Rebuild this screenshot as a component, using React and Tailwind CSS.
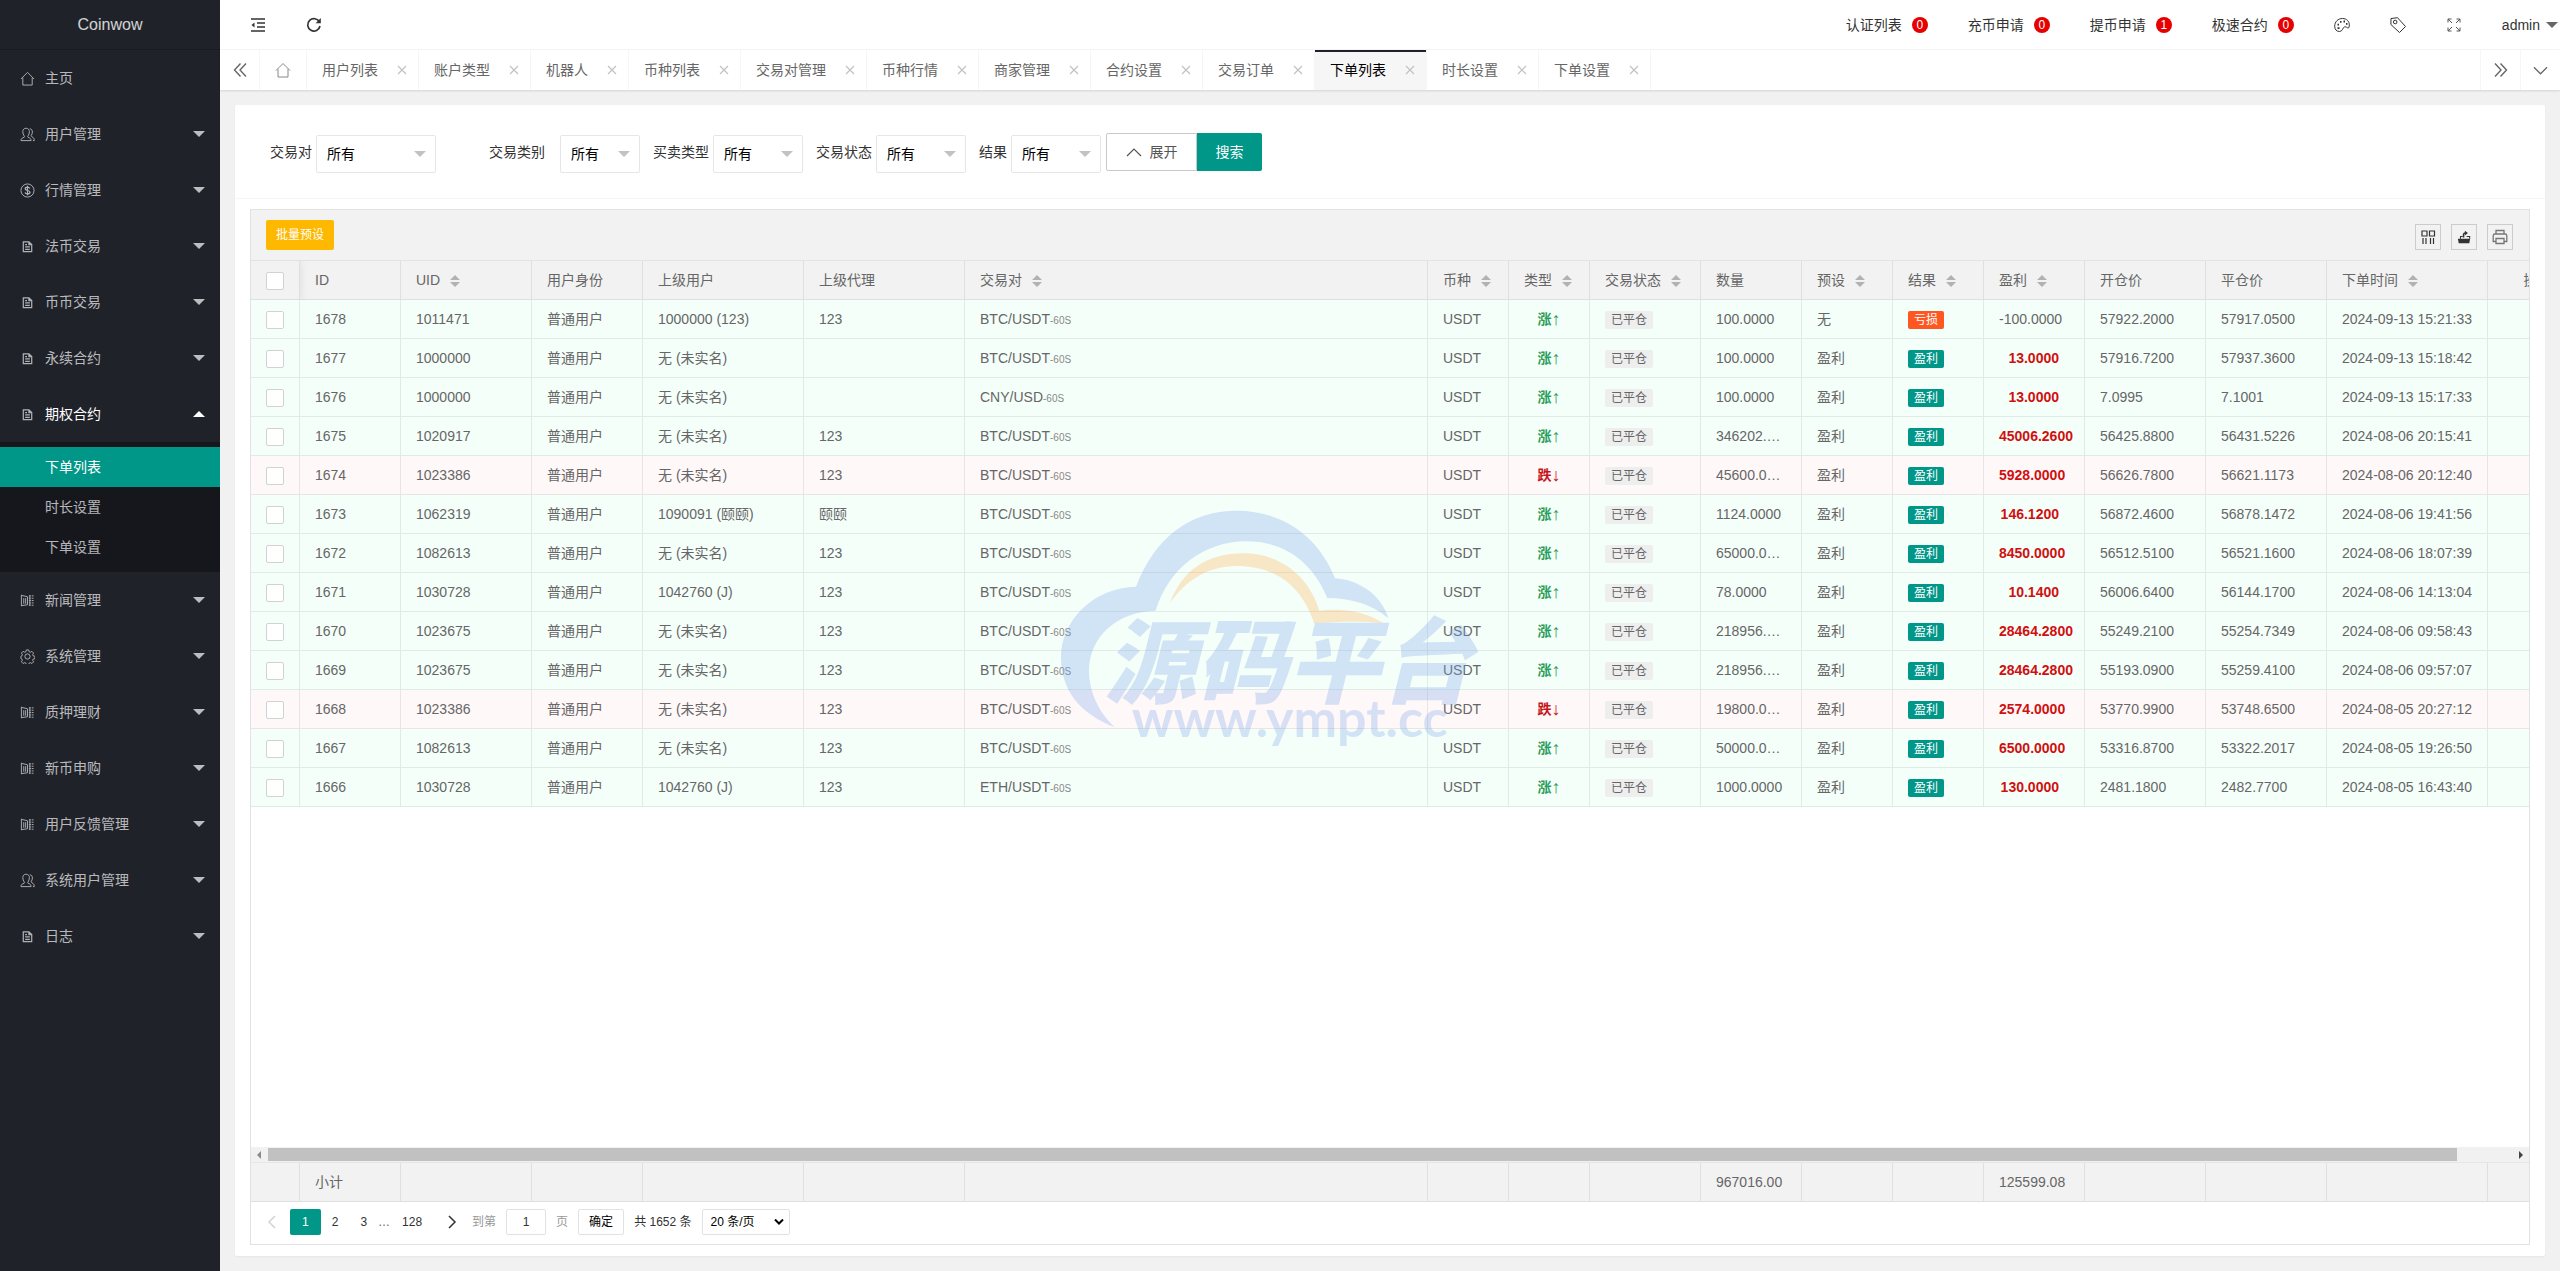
import { useState } from 'react'

const NAV = [
  { label: '主页', icon: 'home' },
  { label: '用户管理', icon: 'user', sub: true },
  { label: '行情管理', icon: 'dollar', sub: true },
  { label: '法币交易', icon: 'file', sub: true },
  { label: '币币交易', icon: 'file', sub: true },
  { label: '永续合约', icon: 'file', sub: true },
  { label: '期权合约', icon: 'file', sub: true, children: ['下单列表', '时长设置', '下单设置'] },
  { label: '新闻管理', icon: 'book', sub: true },
  { label: '系统管理', icon: 'gear', sub: true },
  { label: '质押理财', icon: 'book', sub: true },
  { label: '新币申购', icon: 'book', sub: true },
  { label: '用户反馈管理', icon: 'book', sub: true },
  { label: '系统用户管理', icon: 'user', sub: true },
  { label: '日志', icon: 'file', sub: true },
]

const TABS = ['用户列表', '账户类型', '机器人', '币种列表', '交易对管理', '币种行情', '商家管理', '合约设置', '交易订单', '下单列表', '时长设置', '下单设置']

const NOTICES = [['认证列表', 0], ['充币申请', 0], ['提币申请', 1], ['极速合约', 0]]

const COLUMNS = [
  { label: 'ID', col: 'w-[101px]' },
  { label: 'UID', col: 'w-[131px]', sort: true },
  { label: '用户身份', col: 'w-[111px]' },
  { label: '上级用户', col: 'w-[161px]' },
  { label: '上级代理', col: 'w-[161px]' },
  { label: '交易对', col: 'w-auto', sort: true },
  { label: '币种', col: 'w-[81px]', sort: true },
  { label: '类型', col: 'w-[81px]', sort: true },
  { label: '交易状态', col: 'w-[111px]', sort: true },
  { label: '数量', col: 'w-[101px]' },
  { label: '预设', col: 'w-[91px]', sort: true },
  { label: '结果', col: 'w-[91px]', sort: true },
  { label: '盈利', col: 'w-[101px]', sort: true },
  { label: '开仓价', col: 'w-[121px]' },
  { label: '平仓价', col: 'w-[121px]' },
  { label: '下单时间', col: 'w-[161px]', sort: true },
  { label: '操作', col: 'w-[100px]', center: true },
]

// id, uid, parent, agent, pair, up, amount, preset, profit, open, close, time
const ORDERS = [
  ['1678', '1011471', '1000000 (123)', '123', 'BTC/USDT', true, '100.0000', '无', '-100.0000', '57922.2000', '57917.0500', '2024-09-13 15:21:33'],
  ['1677', '1000000', '无 (未实名)', '', 'BTC/USDT', true, '100.0000', '盈利', '13.0000', '57916.7200', '57937.3600', '2024-09-13 15:18:42'],
  ['1676', '1000000', '无 (未实名)', '', 'CNY/USD', true, '100.0000', '盈利', '13.0000', '7.0995', '7.1001', '2024-09-13 15:17:33'],
  ['1675', '1020917', '无 (未实名)', '123', 'BTC/USDT', true, '346202.0000', '盈利', '45006.2600', '56425.8800', '56431.5226', '2024-08-06 20:15:41'],
  ['1674', '1023386', '无 (未实名)', '123', 'BTC/USDT', false, '45600.0000', '盈利', '5928.0000', '56626.7800', '56621.1173', '2024-08-06 20:12:40'],
  ['1673', '1062319', '1090091 (颐颐)', '颐颐', 'BTC/USDT', true, '1124.0000', '盈利', '146.1200', '56872.4600', '56878.1472', '2024-08-06 19:41:56'],
  ['1672', '1082613', '无 (未实名)', '123', 'BTC/USDT', true, '65000.0000', '盈利', '8450.0000', '56512.5100', '56521.1600', '2024-08-06 18:07:39'],
  ['1671', '1030728', '1042760 (J)', '123', 'BTC/USDT', true, '78.0000', '盈利', '10.1400', '56006.6400', '56144.1700', '2024-08-06 14:13:04'],
  ['1670', '1023675', '无 (未实名)', '123', 'BTC/USDT', true, '218956.0000', '盈利', '28464.2800', '55249.2100', '55254.7349', '2024-08-06 09:58:43'],
  ['1669', '1023675', '无 (未实名)', '123', 'BTC/USDT', true, '218956.0000', '盈利', '28464.2800', '55193.0900', '55259.4100', '2024-08-06 09:57:07'],
  ['1668', '1023386', '无 (未实名)', '123', 'BTC/USDT', false, '19800.0000', '盈利', '2574.0000', '53770.9900', '53748.6500', '2024-08-05 20:27:12'],
  ['1667', '1082613', '无 (未实名)', '123', 'BTC/USDT', true, '50000.0000', '盈利', '6500.0000', '53316.8700', '53322.2017', '2024-08-05 19:26:50'],
  ['1666', '1030728', '1042760 (J)', '123', 'ETH/USDT', true, '1000.0000', '盈利', '130.0000', '2481.1800', '2482.7700', '2024-08-05 16:43:40'],
]

const TOTALS = { ID: '小计', 数量: '967016.00', 盈利: '125599.08' }

const PATHS = {
  home: <path d="M1 8.5 8 1.5l7 7M3 7v8h10V7" />,
  user: (
    <>
      <path d="M1 14.500h10.800c0-2-1-2.800-3.200-3.500-.5-.2-.5-1 0-1.500C9.500 8.300 10 6.700 10 5c0-2.300-1.300-3.700-3.500-3.700S3 2.700 3 5c0 1.700.5 3.300 1.400 4.500.5.500.5 1.300 0 1.500C2.200 11.700 1 12.500 1 14.500z" />
      <path d="M10.500 1.800c1.800.3 2.700 1.600 2.700 3.500 0 1.500-.5 2.700-1.300 3.900.1.700.4 1 1 1.300 1.600.8 2.300 1.700 2.300 4h-1.400" />
    </>
  ),
  dollar: (
    <>
      <circle cx="8" cy="8" r="7" />
      <path d="M10.500 5.800C10 4.900 9.200 4.500 8 4.500c-1.500 0-2.500.7-2.500 1.700 0 2.400 5.200 1.200 5.200 3.600 0 1.100-1.100 1.800-2.700 1.800-1.400 0-2.300-.5-2.700-1.500M8 3v10" strokeWidth="1.300" />
    </>
  ),
  file: <path d="M3.500 3h6l3 3v7.500h-9zM9.500 3v3h3M5.500 8.500h5M5.500 11h5M5.500 6h2" strokeWidth="1.300" />,
  book: (
    <>
      <path d="M1.500 2v12M1.500 2.500 8 4v8.500l-6.500 1M4 5.500v6M6 5.500v6" />
      <path d="M9.500 3h5M9.500 5.500h5M9.500 8h5M9.500 10.500h5M9.500 13h5" strokeDasharray="2 1" />
      <path d="M10.500 2.500v11" />
    </>
  ),
  gear: (
    <>
      <circle cx="8" cy="8" r="2.800" />
      <path d="M6.700 1h2.600l.4 1.900 1.300.6 1.700-1 1.800 1.800-1 1.700.5 1.300 1.900.4v2.600l-1.900.4-.5 1.300 1 1.700-1.800 1.800-1.700-1-1.300.6-.4 1.900H6.700l-.4-1.900-1.300-.6-1.700 1-1.800-1.800 1-1.700L2 10.700l-1-.4V7.700L2 7.300l.5-1.300-1-1.700 1.800-1.800 1.700 1 1.300-.6z" />
    </>
  ),
  shrink: (
    <>
      <path d="M1 2h14M7 6h8M7 10h8M1 14h14" strokeWidth="1.600" />
      <path d="M4.500 5.500 1.500 8l3 2.500z" fill="currentColor" stroke="none" />
    </>
  ),
  refresh: (
    <>
      <path d="M13.500 5.200A6.200 6.200 0 1 0 14 9" strokeWidth="1.700" />
      <path d="M14.800 1v5.200H9.600z" fill="currentColor" stroke="none" />
    </>
  ),
  palette: (
    <>
      <path d="M5.500 14.500C2.500 14.500.7 12.500.7 9.200.7 4.800 4 1.500 8.500 1.500c4.200 0 6.800 2.800 6.800 6.300 0 1.900-.4 3.200-1 3.200-1.200 0-1.800-1.500-3.600-1.200-2.300.4-1.700 4.700-5.200 4.700z" />
      <path d="M3.500 11.200h2M3.500 7.600h1.500M6 4.800h1.500M9.500 4.500H11M12 6.800h1.500" strokeWidth="1.800" />
    </>
  ),
  tag: (
    <>
      <path d="M1 1.500 7.500.7l8 8.800-6 6L.9 7.500z" />
      <circle cx="5.200" cy="5" r="1.800" />
    </>
  ),
  full: <path d="M2 5.500V2h3.500M2 2l4 4M10.500 2H14v3.500M14 2l-4 4M2 10.500V14h3.500M2 14l4-4M14 10.500V14h-3.500M14 14l-4-4" />,
  left2: <path d="M8.500 1.500 2.500 8l6 6.500M14 1.500 8 8l6 6.500" strokeWidth="1.400" />,
  right2: <path d="M2 1.500 8 8l-6 6.500M7.500 1.500l6 6.500-6 6.500" strokeWidth="1.400" />,
  down: <path d="M1 4.500 8 11.500l7-7" strokeWidth="1.300" />,
  up: <path d="M1 12 8 5l7 7" strokeWidth="1.200" />,
  prev: <path d="M11 2 5 8l6 6" strokeWidth="1.500" />,
  next: <path d="M5 2l6 6-6 6" strokeWidth="1.500" />,
  close: <path d="M4 4l8 8M12 4l-8 8" strokeWidth="1.200" />,
  cols: <path d="M2 2h5v5H2zM9.500 2h5v5h-5zM3 9v6M6 9v6M10.500 9v6M13.500 9v6" strokeWidth="1.200" />,
  exportIcon: (
    <>
      <path d="M4 10V7.500h2.500M11 7.500h3.500V10" strokeWidth="1.200" />
      <path d="M1 10h14l-1 5H2z" fill="currentColor" stroke="none" />
      <path d="M7.500 8.500V5.500c0-1.300.8-2 2-2" strokeWidth="1.800" />
      <path d="M9 .8l3.500 2.700L9 6.200z" fill="currentColor" stroke="none" />
    </>
  ),
  print: <path d="M4 5V1.500h8V5M3.500 12.500H1.200V6.800C1.200 5.800 2 5 3 5h10c1 0 1.800.8 1.800 1.800v5.700h-2.300M4 9.500h8v5H4z" strokeWidth="1.300" />,
}

function Icon({ name, className = 'size-4' }) {
  return (
    <svg viewBox="0 0 16 16" fill="none" stroke="currentColor" className={`shrink-0 ${className}`} aria-hidden="true">
      {PATHS[name]}
    </svg>
  )
}

function Caret({ up, className }) {
  return (
    <svg viewBox="0 0 12 6" fill="currentColor" className={`h-1.5 w-3 shrink-0 ${className}`} aria-hidden="true">
      <path d={up ? 'M0 6 6 0l6 6z' : 'M0 0h12L6 6z'} />
    </svg>
  )
}

function Sidebar() {
  return (
    <nav className="w-[220px] shrink-0 overflow-hidden bg-[#20222a] text-sm text-white/70">
      <div className="flex h-[50px] items-center justify-center border-b border-black/20 text-base text-white/80">Coinwow</div>
      <ul>
        {NAV.map((item) => (
          <li key={item.label}>
            <a href="#" className={`flex h-14 items-center pl-5 pr-[15px] ${item.children ? 'text-white' : ''}`}>
              <Icon name={item.icon} className="size-[15px] text-white opacity-65" />
              <span className="ml-2.5 flex-1">{item.label}</span>
              {item.sub && <Caret up={!!item.children} />}
            </a>
            {item.children && (
              <ul className="bg-black/30 py-[5px]">
                {item.children.map((child) => (
                  <li key={child}>
                    <a href="#" className={`flex h-10 items-center pl-[45px] ${child === '下单列表' ? 'bg-[#009688] text-white' : ''}`}>{child}</a>
                  </li>
                ))}
              </ul>
            )}
          </li>
        ))}
      </ul>
    </nav>
  )
}

function Header() {
  return (
    <header className="flex h-[50px] items-center justify-between border-b border-[#f6f6f6] bg-white">
      <div className="flex items-center pl-[30px]">
        <button aria-label="侧边伸缩"><Icon name="shrink" /></button>
        <button aria-label="刷新" className="ml-10"><Icon name="refresh" /></button>
      </div>
      <div className="flex items-center">
        {NOTICES.map(([label, count]) => (
          <a href="#" key={label} className="flex items-center px-5">
            {label}
            <span className="ml-2.5 flex size-4 items-center justify-center rounded-full bg-[#e60000] text-xs text-white">{count}</span>
          </a>
        ))}
        <button aria-label="主题" className="px-5"><Icon name="palette" /></button>
        <button aria-label="便签" className="px-5"><Icon name="tag" /></button>
        <button aria-label="全屏" className="px-5 text-[#555]"><Icon name="full" /></button>
        <a href="#" className="flex items-center pl-5 pr-0.5">
          admin
          <Caret className="ml-1.5 text-[#666]" />
        </a>
      </div>
    </header>
  )
}

function TabBar({ active, onSelect }) {
  return (
    <div className="relative z-10 flex h-10 bg-white text-[#666] shadow-[0_1px_2px_rgba(0,0,0,0.12)]">
      <button aria-label="向左" className="flex w-10 items-center justify-center border-r border-[#f6f6f6]"><Icon name="left2" /></button>
      <button aria-label="主页" className="flex w-[47px] items-center justify-center border-r border-[#f6f6f6] text-[#888]"><Icon name="home" /></button>
      {TABS.map((tab) => (
        <div
          key={tab}
          className={`flex items-center border-r border-[#f6f6f6] pl-[15px] pr-2 ${
            tab === active ? 'bg-[#f6f6f6] text-black shadow-[inset_0_2px_0_#20222a]' : ''
          }`}
        >
          <button onClick={() => onSelect(tab)}>{tab}</button>
          <button aria-label={`关闭${tab}`} className="ml-4 text-[#c2c2c2]"><Icon name="close" /></button>
        </div>
      ))}
      <button aria-label="向右" className="ml-auto flex w-10 items-center justify-center border-l border-[#f6f6f6]"><Icon name="right2" /></button>
      <button aria-label="更多" className="flex w-10 items-center justify-center border-l border-[#f6f6f6]"><Icon name="down" className="size-[15px]" /></button>
    </div>
  )
}

function Filter({ label, gap, width }) {
  return (
    <label className={`flex ${gap}`}>
      <span className="leading-[38px]">{label}</span>
      <span className={`relative mt-0.5 ${width}`}>
        <select className="h-[38px] w-full appearance-none rounded-xs border border-[#e6e6e6] bg-white pl-2.5 text-black">
          <option>所有</option>
        </select>
        <Caret className="pointer-events-none absolute right-2.5 top-4 text-[#c2c2c2]" />
      </span>
    </label>
  )
}

function Filters() {
  return (
    <form className="flex h-[94px] border-b border-[#f6f6f6] pl-[35px] pt-7" onSubmit={(e) => e.preventDefault()}>
      <Filter label="交易对" gap="gap-1" width="w-[120px]" />
      <Filter label="交易类别" gap="ml-[53px] gap-[15px]" width="w-20" />
      <Filter label="买卖类型" gap="ml-[13px] gap-1" width="w-[90px]" />
      <Filter label="交易状态" gap="ml-[13px] gap-1" width="w-[90px]" />
      <Filter label="结果" gap="ml-[13px] gap-1" width="w-[90px]" />
      <button type="button" className="ml-[5px] flex h-[38px] w-[91px] items-center justify-center gap-2 rounded-l-xs border border-[#c9c9c9] text-[#555]">
        <Icon name="up" />
        展开
      </button>
      <button className="h-[38px] w-[65px] rounded-r-xs bg-[#009688] text-white">搜索</button>
    </form>
  )
}

function Columns() {
  return (
    <colgroup>
      <col className="w-[49px]" />
      {COLUMNS.map((c) => <col key={c.label} className={c.col} />)}
    </colgroup>
  )
}

function Check({ label }) {
  return (
    <input
      type="checkbox"
      aria-label={label}
      className="mx-auto mt-px block size-[18px] appearance-none rounded-xs border border-[#d2d2d2] bg-white checked:bg-[#5fb878]"
    />
  )
}

const CELL = 'h-[39px] truncate border-r border-b border-black/8 px-[15px] text-left font-normal'
const TABLE = 'w-[calc(100%+59px)] table-fixed border-separate border-spacing-0'

function OrderRow({ order }) {
  const [id, uid, parent, agent, pair, up, amount, preset, profit, open, close, time] = order
  const loss = profit.startsWith('-')
  return (
    <tr className={up ? 'bg-[#f5fffa]' : 'bg-[#fff8f8]'}>
      <td className="h-[39px] border-r border-b border-black/8"><Check label={id} /></td>
      <td className={CELL}>{id}</td>
      <td className={CELL}>{uid}</td>
      <td className={CELL}>普通用户</td>
      <td className={CELL}>{parent}</td>
      <td className={CELL}>{agent}</td>
      <td className={CELL}>{pair}<span className="text-[10px] text-[#888]">-60S</span></td>
      <td className={CELL}>USDT</td>
      <td className="h-[39px] border-r border-b border-black/8">
        <span className={`flex items-center justify-center leading-5 ${up ? 'text-[#2a9d57]' : 'text-[#c4161c]'}`}>
          <b>{up ? '涨' : '跌'}</b>
          <span className="text-lg leading-5">{up ? '↑' : '↓'}</span>
        </span>
      </td>
      <td className={CELL}>
        <span className="inline-block h-[18px] rounded-xs bg-[#eee] px-1.5 text-xs leading-[18px]">已平仓</span>
      </td>
      <td className={CELL}>{amount}</td>
      <td className={CELL}>{preset}</td>
      <td className={CELL}>
        <span className={`inline-block h-[18px] rounded-xs px-1.5 text-xs leading-[18px] text-white ${loss ? 'bg-[#ff5722]' : 'bg-[#009688]'}`}>
          {loss ? '亏损' : '盈利'}
        </span>
      </td>
      <td className="h-[39px] border-r border-b border-black/8 px-[15px]">
        {loss ? profit : <b className="block w-[60px] text-right text-[#d01010]">{profit}</b>}
      </td>
      <td className={CELL}>{open}</td>
      <td className={CELL}>{close}</td>
      <td className={CELL}>{time}</td>
      <td className={CELL} />
    </tr>
  )
}

function OrderTable() {
  return (
    <div className="flex-1 overflow-hidden">
      <table className={TABLE}>
        <Columns />
        <thead>
          <tr className="bg-[#f2f2f2]">
            <th className="h-[39px] border-r border-b border-black/8 shadow-[1px_0_8px_rgba(0,0,0,0.08)]"><Check label="全选" /></th>
            {COLUMNS.map((c) => (
              <th key={c.label} className={CELL}>
                <span className={`flex items-center ${c.center ? 'justify-center' : ''}`}>
                  {c.label}
                  {c.sort && (
                    <svg viewBox="0 0 10 12" fill="#b2b2b2" className="ml-2.5 mt-0.5 h-3 w-2.5 shrink-0" aria-hidden="true">
                      <path d="M0 5 5 0l5 5zM0 7h10l-5 5z" />
                    </svg>
                  )}
                </span>
              </th>
            ))}
          </tr>
        </thead>
        <tbody>
          {ORDERS.map((order) => <OrderRow key={order[0]} order={order} />)}
        </tbody>
      </table>
    </div>
  )
}

function ScrollBar() {
  return (
    <div className="flex h-4 items-center border-b border-[#e6e6e6] bg-[#f1f1f1]">
      <svg viewBox="0 0 4 8" fill="#8a8a8a" className="mx-1.5 h-2 w-1 shrink-0"><path d="M4 0v8L0 4z" /></svg>
      <div className="ml-px flex-1">
        <div className="h-[13px] w-[97.5%] bg-[#c1c1c1]" />
      </div>
      <svg viewBox="0 0 4 8" fill="#444" className="mx-1.5 h-2 w-1 shrink-0"><path d="M0 0v8l4-4z" /></svg>
    </div>
  )
}

function Pager() {
  return (
    <div className="flex h-[42px] items-center pl-[13px] pb-0.5 text-xs text-[#333]">
      <button aria-label="上一页" className="text-[#d2d2d2]"><Icon name="prev" /></button>
      <button className="ml-2.5 h-[26px] rounded-xs bg-[#009688] px-3 text-white">1</button>
      <button className="px-[11px]">2</button>
      <button className="px-[11px]">3</button>
      <span className="text-[#666]">…</span>
      <button className="px-3">128</button>
      <button aria-label="下一页" className="ml-2.5"><Icon name="next" /></button>
      <label className="ml-3 flex items-center text-[#999]">
        到第
        <input defaultValue="1" className="mx-2.5 h-[26px] w-10 rounded-xs border border-[#e2e2e2] text-center text-[#333]" />
        页
      </label>
      <button className="ml-2.5 h-[26px] w-[46px] rounded-xs border border-[#e2e2e2] text-black">确定</button>
      <span className="ml-2.5">共 1652 条</span>
      <label className="relative ml-2.5">
        <select aria-label="每页条数" className="h-[26px] w-[88px] appearance-none rounded-xs border border-[#e2e2e2] pl-2 text-black">
          <option>20 条/页</option>
        </select>
        <svg viewBox="0 0 10 6" fill="none" stroke="#000" strokeWidth="2" className="pointer-events-none absolute right-1.5 top-2.5 h-1.5 w-2.5">
          <path d="M1 .5l4 4 4-4" />
        </svg>
      </label>
    </div>
  )
}

function Watermark() {
  return (
    <div className="pointer-events-none absolute inset-0 flex items-center justify-center">
      <svg viewBox="0 16 1440 840" className="h-[280px] w-[480px] opacity-30" fill="#7ca8ed">
        <path d="M225 710C120 670 63 600 63 500C63 390 160 290 288 288C345 140 450 60 590 60C725 60 835 135 885 263C960 268 1025 315 1045 383C995 340 930 322 862 322C815 210 730 152 620 152C490 152 385 235 347 360C230 362 147 440 147 540C147 600 175 665 225 710Z" />
        <path fill="#fdb253" d="M390 338C425 240 500 188 610 188C715 188 805 250 838 360C910 352 975 362 1035 400C965 388 890 392 823 400C785 280 700 226 590 226C505 226 435 270 390 338Z" />
        <text x="192" y="616" fontSize="276" fontWeight="900" fontStyle="italic" fontFamily="'Noto Sans CJK SC', sans-serif">源码平台</text>
        <text x="275" y="740" fontSize="156" fontWeight="700" fontFamily="Lato, sans-serif">www.ympt.cc</text>
      </svg>
    </div>
  )
}

function App() {
  const [active, setActive] = useState('下单列表')

  return (
    <div className="relative flex h-screen bg-[#f1f1f1] font-['Liberation_Sans','Noto_Sans_CJK_SC',sans-serif] text-sm text-[#333]">
      <Sidebar />
      <div className="flex min-w-0 flex-1 flex-col">
        <Header />
        <TabBar active={active} onSelect={setActive} />
        <main className="flex min-h-0 flex-1 flex-col p-[15px]">
          <div className="flex min-h-0 flex-1 flex-col rounded-xs bg-white shadow-[0_1px_2px_rgba(0,0,0,0.05)]">
            <Filters />
            <div className="mx-[15px] mb-[11px] mt-2.5 flex min-h-0 flex-1 flex-col overflow-hidden border border-[#e2e2e2] text-[#666]">
              <div className="flex h-[51px] shrink-0 items-center justify-between border-b border-[#e2e2e2] bg-[#f2f2f2] pl-[15px] pr-4">
                <button className="h-[30px] rounded-xs bg-[#ffb800] px-2.5 text-xs text-white">批量预设</button>
                <div className="mt-1 flex gap-2.5 text-[#333]">
                  <button aria-label="筛选列" className="flex size-[26px] items-center justify-center border border-[#ccc]"><Icon name="cols" /></button>
                  <button aria-label="导出" className="flex size-[26px] items-center justify-center border border-[#ccc]"><Icon name="exportIcon" className="size-3.5" /></button>
                  <button aria-label="打印" className="flex size-[26px] items-center justify-center border border-[#ccc] text-[#777]"><Icon name="print" /></button>
                </div>
              </div>
              <OrderTable />
              <ScrollBar />
              <div className="shrink-0 overflow-hidden bg-[#f2f2f2]">
                <table className={TABLE}>
                  <Columns />
                  <tbody>
                    <tr>
                      <td className={CELL} />
                      {COLUMNS.map((c) => <td key={c.label} className={CELL}>{TOTALS[c.label]}</td>)}
                    </tr>
                  </tbody>
                </table>
              </div>
              <Pager />
            </div>
          </div>
        </main>
      </div>
      <Watermark />
    </div>
  )
}

export default App
